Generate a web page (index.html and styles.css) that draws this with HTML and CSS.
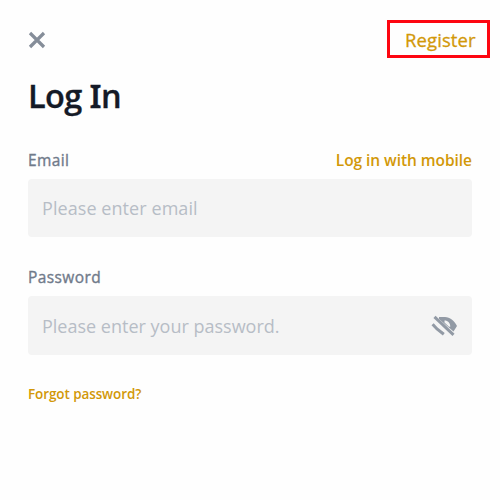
FILE: index.html
```html
<!DOCTYPE html>
<html lang="en">
<head>
<meta charset="utf-8">
<title>Log In</title>
<link rel="stylesheet" href="styles.css">
</head>
<body>
<main class="page">
  <header class="topbar">
    <svg class="close" viewBox="0 0 18 18"><path d="M2 2 16 16M16 2 2 16"/></svg>
    <a class="register">Register</a>
  </header>
  <h1 class="title">Log <span class="cap-i">I</span>n</h1>
  <div class="labels">
    <label>Email</label>
    <a class="mobile">Log in with mobile</a>
  </div>
  <div class="field"><span class="hint-email">Please enter email</span></div>
  <div class="labels second">
    <label class="password-label">Password</label>
  </div>
  <div class="field password">
    <span>Please enter your password.</span>
    <svg class="eye" viewBox="0 0 28 24">
      <path class="shape" fill-rule="evenodd" d="M9 3H15C20 3 24 6.500 27 12L23.500 17.500 9 5ZM14.500 6.500V8.500L19 12.800H20.300C20.300 9 18 6.500 14.500 6.500Z"/>
      <path class="strip" d="M2.600 10.200 7 15 13.800 20.300"/>
      <path class="slash" d="M4.500 2.800 23.500 20.800"/>
    </svg>
  </div>
  <a class="forgot">Forgot password?</a>
</main>
</body>
</html>
```
FILE: styles.css
```css
* { box-sizing: border-box; }
body {
  margin: 0;
  background: #fefefe;
  font-family: "Open Sans", "Noto Sans", sans-serif;
  color: #707a8a;
}
.page { width: 500px; height: 500px; padding: 20px 28px 0; white-space: nowrap; }
.topbar { display: flex; justify-content: space-between; margin-right: -18px; height: 38px; }
.close { width: 18px; height: 18px; margin-top: 11px; fill: none; stroke: #858d99; stroke-width: 3.2; }
.register {
  width: 103px;
  height: 38px;
  border: 3px solid #fd0610;
  padding-left: 15px;
  line-height: 34px;
  font-size: 18.500px;
  letter-spacing: 0.1px;
  color: #d29808;
  -webkit-text-stroke: 0.3px;
}
.title {
  height: 48px;
  margin: 14px 0 0;
  font-size: 32.500px;
  line-height: 48px;
  font-weight: 600;
  letter-spacing: -0.6px;
  color: #141a27;
  -webkit-text-stroke: 0.3px;
}
.cap-i { font-family: "Noto Sans", sans-serif; }
.labels {
  display: flex;
  justify-content: space-between;
  height: 22px;
  margin-top: 29px;
  line-height: 22px;
  font-size: 15.500px;
  letter-spacing: 0.4px;
  -webkit-text-stroke: 0.35px;
}
.second { margin-top: 29px; }
.mobile {
  color: #d29808;
  font-weight: 600;
  letter-spacing: -0.05px;
  -webkit-text-stroke: 0;
}
.field {
  display: flex;
  align-items: center;
  justify-content: space-between;
  height: 58px;
  margin-top: 8px;
  padding: 0 14px;
  border-radius: 4px;
  background: #f4f4f4;
  font-size: 18px;
  color: #b7bdc6;
}
.hint-email { letter-spacing: 0.07px; }
.password { height: 59px; }
.eye { width: 28px; height: 24px; }
.shape { fill: #929aa5; }
.strip, .slash { fill: none; stroke: #929aa5; stroke-width: 3; }
.forgot {
  display: block;
  margin-top: 29px;
  line-height: 20px;
  font-size: 13.500px;
  font-weight: 600;
  letter-spacing: -0.1px;
  color: #d29808;
}
```
